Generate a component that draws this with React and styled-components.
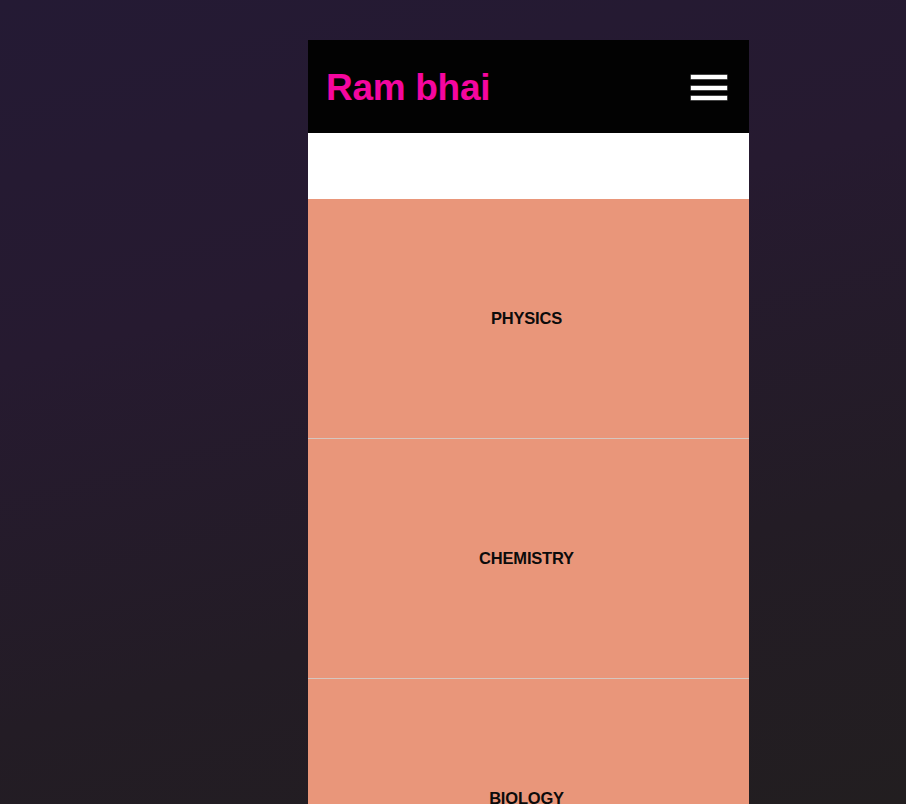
import React from "react";
import styled, { createGlobalStyle } from "styled-components";

const Global = createGlobalStyle`
  html, body { margin: 0; padding: 0; }
  body {
    min-height: 100vh;
    background: linear-gradient(165deg, #241a34 0%, #261a30 35%, #231c25 70%, #221e20 100%);
    background-attachment: fixed;
    font-family: "Liberation Sans", Arial, sans-serif;
  }
`;

const Page = styled.div`
  padding: 40px 0 0 308px;
`;

const Phone = styled.div`
  width: 441px;
  display: flex;
  flex-direction: column;
`;

const Header = styled.header`
  height: 93px;
  background: #020202;
  display: flex;
  align-items: center;
  justify-content: space-between;
  padding: 0 22px 0 18px;
  box-sizing: border-box;
`;

const Brand = styled.h1`
  margin: 0;
  color: #f5069f;
  font-size: 37px;
  font-weight: 700;
  letter-spacing: -0.3px;
  position: relative;
  top: 1px;
`;

const Burger = styled.button`
  width: 36px;
  padding: 0;
  border: none;
  background: none;
  display: flex;
  flex-direction: column;
  gap: 6.5px;
  cursor: pointer;
  margin-top: 2px;
`;

const Bar = styled.span`
  display: block;
  height: 4px;
  background: #fff;
  box-shadow: 0 0 0 0.5px #888;
`;

const Spacer = styled.div`
  height: 66px;
  background: #ffffff;
`;

const Subject = styled.div`
  height: 239px;
  background: #e9967a;
  border-bottom: 1px solid #d6c6bf;
  display: flex;
  align-items: center;
  justify-content: center;
  color: #0b0b0b;
  font-size: 16.5px;
  font-weight: 700;
  letter-spacing: -0.2px;
  padding-right: 4px;
`;

const subjects = ["PHYSICS", "CHEMISTRY", "BIOLOGY", "MATHS"];

export default function App() {
  return (
    <>
      <Global />
      <Page>
        <Phone>
          <Header>
            <Brand>Ram bhai</Brand>
            <Burger aria-label="menu">
              <Bar />
              <Bar />
              <Bar />
            </Burger>
          </Header>
          <Spacer />
          {subjects.map((s) => (
            <Subject key={s}>{s}</Subject>
          ))}
        </Phone>
      </Page>
    </>
  );
}
